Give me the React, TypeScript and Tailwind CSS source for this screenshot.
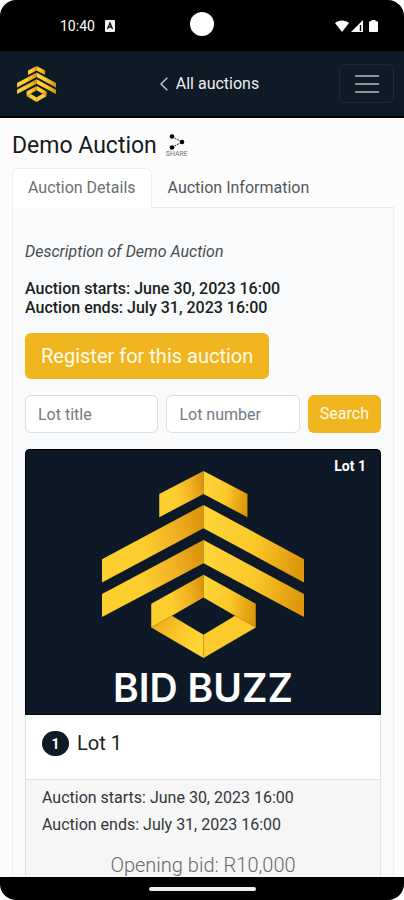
import { useState } from 'react';

const NAV_BG = 'bg-[#0e1a26]';

function Logo({ className, id }: { className: string; id: string }) {
  const rise = `url(#${id}-rise)`;
  const fall = `url(#${id}-fall)`;
  const base = `url(#${id}-base)`;

  return (
    <svg viewBox="38 33 607 562" className={className} aria-hidden="true">
      <defs>
        <linearGradient id={`${id}-rise`} x1="0" y1="0.6" x2="1" y2="0.4">
          <stop offset="0" stopColor="#fdcf2e" />
          <stop offset="0.4" stopColor="#fbcd2e" />
          <stop offset="0.75" stopColor="#f0b022" />
          <stop offset="1" stopColor="#dd960f" />
        </linearGradient>
        <linearGradient id={`${id}-fall`} x1="0" y1="0.4" x2="1" y2="0.6">
          <stop offset="0" stopColor="#fed438" />
          <stop offset="0.5" stopColor="#fbc929" />
          <stop offset="1" stopColor="#de960b" />
        </linearGradient>
        <linearGradient id={`${id}-base`} x1="0" y1="0" x2="1" y2="0.5">
          <stop offset="0" stopColor="#e7a21a" />
          <stop offset="0.6" stopColor="#fbc92b" />
          <stop offset="1" stopColor="#fed535" />
        </linearGradient>
      </defs>
      <path d="M343 33 210 102V172L343 102Z" fill={rise} />
      <path d="M343 33 475 102V172L343 102Z" fill={fall} />
      <path d="M343 135 38 298V368L343 205Z" fill={rise} />
      <path d="M343 135 645 298V368L343 205Z" fill={fall} />
      <path d="M343 240 38 403V472L343 310Z" fill={rise} />
      <path d="M343 240 645 403V472L343 310Z" fill={fall} />
      <path d="M343 345 186 432V503L248 468 343 413Z" fill={rise} />
      <path d="M343 345 500 432V503L438 468 343 413Z" fill={fall} />
      <path d="M186 503 248 468 343 525V595Z" fill={base} />
      <path d="M500 503 438 468 343 525V595Z" fill="#fccb2c" />
    </svg>
  );
}

function StatusBar() {
  return (
    <div className="relative flex h-[51px] shrink-0 items-center justify-between rounded-t-2xl bg-black pr-6 pl-[60px] text-white">
      <div className="flex items-center gap-[10px]">
        <span className="text-sm">10:40</span>
        <svg viewBox="0 0 10 12" className="h-3 w-[10px]" aria-hidden="true">
          <rect width="10" height="12" rx="1" fill="#f2f2f2" />
          <path d="M2.500 9 5 3 7.500 9M3.500 7h3" fill="none" stroke="#111" strokeWidth="1.300" />
        </svg>
      </div>
      {/* Camera cutout */}
      <div className="absolute top-3 left-1/2 size-6 -translate-x-1/2 rounded-full bg-white" />
      <svg viewBox="0 0 46 14" className="h-[14px] w-[46px]" fill="#fff" aria-hidden="true">
        <path d="M1 4C4.500 .5 11.500 .5 15 4L8 13Z" />
        <path d="M29 1V13H17Z" />
        <path d="M26.500 6V12" stroke="#000" strokeWidth="1.400" />
        <path d="M37.500 1h4v1.200h1.500a1 1 0 0 1 1 1V12a1 1 0 0 1-1 1h-7a1 1 0 0 1-1-1V3.200a1 1 0 0 1 1-1h1.500Z" />
      </svg>
    </div>
  );
}

function NavBar() {
  return (
    <header
      className={`${NAV_BG} grid h-[67px] shrink-0 grid-cols-[1fr_auto_1fr] items-center border-b-2 border-black pr-[10px] pl-[17px]`}
    >
      <a href="#home" aria-label="Bid Buzz">
        <Logo id="nav" className="h-9 w-[39px]" />
      </a>
      <a href="#auctions" className="flex items-center gap-2 pl-2 text-base text-[#eceeef]">
        <svg viewBox="0 0 8 14" className="h-[14px] w-2" fill="none" stroke="#c3c7cb" strokeWidth="1.500" aria-hidden="true">
          <path d="M7.300 .7 1 7l6.300 6.300" />
        </svg>
        All auctions
      </a>
      <button
        type="button"
        aria-label="Toggle navigation"
        className="flex h-[39px] w-[55px] items-center justify-center justify-self-end rounded-md border border-[#1d2935]"
      >
        <svg viewBox="0 0 24 20" className="h-5 w-6" stroke="#8b9299" strokeWidth="2" aria-hidden="true">
          <path d="M0 2h24M0 10h24M0 18h24" />
        </svg>
      </button>
    </header>
  );
}

function LotCard() {
  return (
    <article className="mt-4 overflow-hidden rounded bg-white">
      <div className="relative flex h-[266px] flex-col items-center rounded-t border border-black bg-[#0d1926] pt-[21px]">
        <Logo id="lot" className="h-[187px] w-[202px]" />
        <p className="mt-2 font-[family-name:Inter,sans-serif] text-[39px] leading-[44px] font-semibold text-white">
          BID BUZZ
        </p>
        <span className="absolute top-[6px] right-[14px] text-sm font-bold text-white">Lot 1</span>
      </div>
      <div className="flex h-[65px] items-start gap-2 border-x border-b border-[#e2e3e4] px-4 pt-4">
        <span className="flex h-[25px] w-[27px] items-center justify-center rounded-full bg-[#0e1a26] text-sm font-bold text-white">
          1
        </span>
        <h2 className="text-xl leading-6 text-[#1c1f22]">Lot 1</h2>
      </div>
      <div className="border-x border-[#e2e3e4] bg-[#f6f6f6] px-4 pt-1 pb-4 text-[#33373b]">
        <p className="text-base leading-[27px]">Auction starts: June 30, 2023 16:00</p>
        <p className="text-base leading-[27px]">Auction ends: July 31, 2023 16:00</p>
        <p className="mt-4 text-center text-xl leading-[22px] font-light text-[#666a6d]">Opening bid: R10,000</p>
      </div>
    </article>
  );
}

const tabs = [
  { id: 'details', label: 'Auction Details' },
  { id: 'info', label: 'Auction Information' },
];

export default function App() {
  const [tab, setTab] = useState('details');

  return (
    <div className="flex h-screen flex-col bg-white font-[Roboto,'Liberation_Sans',sans-serif]">
      <StatusBar />
      <NavBar />

      <main className="min-h-0 flex-1 overflow-hidden bg-[#fcfcfc] pr-[10px] pl-3">
        <div className="flex items-center gap-2 pt-3">
          <h1 className="text-[23px] leading-8 text-[#171a1d]">Demo Auction</h1>
          <button type="button" className="flex w-6 flex-col items-center text-[#6f7274]">
            <svg viewBox="0 0 16 16" className="size-4" aria-hidden="true">
              <path d="M3 2.500 13 8 3 13.500" fill="none" stroke="#222" strokeWidth="1" strokeDasharray="2 1" />
              <g fill="#000">
                <circle cx="3" cy="2.500" r="2.300" />
                <circle cx="13" cy="8" r="2.300" />
                <circle cx="3" cy="13.500" r="2.300" />
              </g>
            </svg>
            <span className="text-[7px] leading-[8px]">SHARE</span>
          </button>
        </div>

        {/* Tabs */}
        <div role="tablist" className="mt-[6px] flex border-b border-[#e8ebee]">
          {tabs.map((t) => (
            <button
              key={t.id}
              type="button"
              role="tab"
              aria-selected={tab === t.id}
              onClick={() => setTab(t.id)}
              className={`-mb-px h-10 rounded-t-md border px-[15px] text-base ${
                tab === t.id
                  ? 'border-[#eceef0] border-b-white bg-white text-[#6d7073]'
                  : 'border-transparent text-[#54585c]'
              }`}
            >
              {t.label}
            </button>
          ))}
        </div>

        <section className="border-x border-[#eceff1] bg-[#f8fafb] px-3 pt-[34px]">
          <p className="text-base leading-[19px] text-[#4a4d50] italic">Description of Demo Auction</p>
          <p className="mt-[18px] text-base leading-[19px] font-medium text-[#1b1e21]">
            Auction starts: June 30, 2023 16:00
            <br />
            Auction ends: July 31, 2023 16:00
          </p>
          <button type="button" className="mt-4 h-[46px] rounded-md bg-[#f1b51f] px-4 text-xl text-[#fffbea]">
            Register for this auction
          </button>

          <form className="mt-4 flex gap-2" onSubmit={(e) => e.preventDefault()}>
            <input
              type="text"
              aria-label="Lot title"
              placeholder="Lot title"
              className="h-[38px] min-w-0 flex-1 rounded-md border border-[#dcdfe2] bg-white px-3 text-base placeholder:text-[#74797e]"
            />
            <input
              type="text"
              aria-label="Lot number"
              placeholder="Lot number"
              className="h-[38px] min-w-0 flex-1 rounded-md border border-[#dcdfe2] bg-white px-3 text-base placeholder:text-[#74797e]"
            />
            <button type="submit" className="h-[38px] rounded-md bg-[#f1b51f] px-3 text-base text-[#fffbea]">
              Search
            </button>
          </form>

          <LotCard />
        </section>
      </main>

      {/* Gesture bar */}
      <div className="flex h-[23px] shrink-0 items-center justify-center rounded-b-2xl bg-black">
        <div className="h-1 w-[107px] rounded-full bg-[#efefef]" />
      </div>
    </div>
  );
}
